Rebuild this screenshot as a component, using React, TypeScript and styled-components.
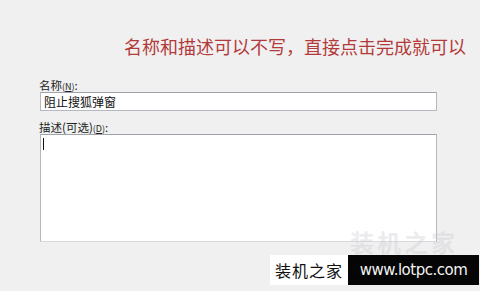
import React from "react";
import styled, { createGlobalStyle } from "styled-components";

const Global = createGlobalStyle`
  html, body { margin: 0; padding: 0; background: #f0f0f0; }
  body { font-family: "Noto Sans CJK SC", "Noto Sans", sans-serif; }
`;

const Page = styled.div`
  position: relative;
  width: 480px;
  height: 291px;
  overflow: hidden;
  background: #f0f0f0;
  display: flex;
  flex-direction: column;
`;

const Hint = styled.div`
  padding: 35px 0 0 124px;
  height: 22px;
  font-size: 18px;
  line-height: 22px;
  color: #b33a3a;
  white-space: nowrap;
`;

const Form = styled.div`
  display: flex;
  flex-direction: column;
  padding: 21px 0 0 39px;
  width: 398px;
`;

const Label = styled.div`
  font-size: 11.5px;
  line-height: 14px;
  color: #222;
  height: 14px;
  u { text-decoration: underline; }
  small { font-size: 9px; }
`;

const Input = styled.div`
  box-sizing: border-box;
  margin-left: 1px;
  height: 19px;
  background: #fff;
  border: 1px solid #b5b8c0;
  border-top-color: #a0a3aa;
  font-size: 12px;
  line-height: 17px;
  padding-left: 3px;
  color: #111;
  margin-bottom: 9px;
`;

const TextArea = styled.div`
  box-sizing: border-box;
  margin-left: 1px;
  height: 108px;
  background: #fff;
  border: 1px solid #b5b8c0;
  border-top-color: #9fa3aa;
  border-bottom-color: #d8dae0;
  padding: 3px 0 0 2px;
`;

const Caret = styled.div`
  width: 1px;
  height: 12px;
  background: #111;
`;

const GhostMark = styled.div`
  position: absolute;
  left: 350px;
  top: 229px;
  font-size: 24px;
  line-height: 26px;
  font-weight: 700;
  color: rgba(205, 205, 210, 0.4);
  letter-spacing: 3px;
  white-space: nowrap;
`;

const Badge = styled.div`
  position: absolute;
  left: 270px;
  top: 255px;
  display: flex;
  height: 30px;
`;

const BadgeName = styled.div`
  width: 78px;
  background: #fff;
  color: #111;
  font-size: 16px;
  line-height: 30px;
  text-align: center;
  letter-spacing: 1px;
`;

const BadgeUrl = styled.div`
  width: 131px;
  background: #050505;
  color: #f2f2f2;
  font-family: "DejaVu Sans", sans-serif;
  font-size: 15px;
  line-height: 30px;
  text-align: center;
  letter-spacing: -0.5px;
`;

export default function App() {
  return (
    <Page>
      <Global />
      <Hint>名称和描述可以不写，直接点击完成就可以</Hint>
      <Form>
        <Label>
          名称<small>(<u>N</u>)</small>:
        </Label>
        <Input>阻止搜狐弹窗</Input>
        <Label>
          描述(可选)<small>(<u>D</u>)</small>:
        </Label>
        <TextArea>
          <Caret />
        </TextArea>
      </Form>
      <GhostMark>装机之家</GhostMark>
      <Badge>
        <BadgeName>装机之家</BadgeName>
        <BadgeUrl>www.lotpc.com</BadgeUrl>
      </Badge>
    </Page>
  );
}
